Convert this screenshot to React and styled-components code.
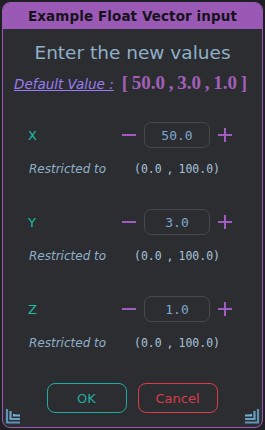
import React from "react";
import styled, { createGlobalStyle } from "styled-components";

const GlobalStyle = createGlobalStyle`
  html, body {
    margin: 0;
    padding: 0;
    background: #1f2023;
  }
  body {
    font-family: "DejaVu Sans", "Liberation Sans", sans-serif;
  }
`;

const Window = styled.div`
  width: 265px;
  height: 430px;
  padding: 2px;
  box-sizing: border-box;
`;

const Panel = styled.div`
  height: 100%;
  box-sizing: border-box;
  border: 1px solid #9b59b6;
  border-radius: 8px;
  background: #2b2d31;
  overflow: hidden;
  display: flex;
  flex-direction: column;
  position: relative;
`;

const Header = styled.div`
  height: 26px;
  background: #9b59b6;
  color: #17131c;
  font-weight: bold;
  font-size: 13.5px;
  display: flex;
  align-items: center;
  justify-content: center;
  letter-spacing: 0.1px;
`;

const Title = styled.div`
  margin-top: 13px;
  text-align: center;
  color: #8fb0c8;
  font-size: 18.5px;
  line-height: 22px;
`;

const DefaultLine = styled.div`
  margin-top: 8px;
  padding-left: 11px;
  display: flex;
  align-items: baseline;
  gap: 8px;
  line-height: 22px;
`;

const DefaultLabel = styled.span`
  color: #9a7cf2;
  font-style: italic;
  font-size: 13.5px;
  text-decoration: underline;
`;

const DefaultValue = styled.span`
  color: #a35fb8;
  font-family: "Liberation Serif", serif;
  font-weight: bold;
  font-size: 19px;
  word-spacing: -1px;
`;

const Group = styled.div`
  margin-top: ${(p) => (p.first ? 27 : 33)}px;
  padding: 0 30px 0 25px;
`;

const Row = styled.div`
  display: flex;
  align-items: center;
  height: 26px;
`;

const AxisLabel = styled.span`
  flex: 1;
  color: #1dbda3;
  font-size: 13px;
`;

const StepButton = styled.span`
  width: 14px;
  height: 14px;
  position: relative;
  &::before,
  &::after {
    content: "";
    position: absolute;
    background: #a05cc0;
  }
  &::before {
    left: 0;
    right: 0;
    top: 6px;
    height: 2px;
  }
  &::after {
    display: ${(p) => (p.plus ? "block" : "none")};
    top: 0;
    bottom: 0;
    left: 6px;
    width: 2px;
  }
`;

const ValueBox = styled.div`
  width: 66px;
  height: 26px;
  margin: 0 8px;
  box-sizing: border-box;
  border: 1.5px solid #45484e;
  border-radius: 7px;
  display: flex;
  align-items: center;
  justify-content: center;
  color: #7fa8d0;
  font-family: "DejaVu Sans Mono", monospace;
  font-size: 13px;
`;

const Restriction = styled.div`
  margin-top: 14px;
  display: grid;
  grid-template-columns: 106px 1fr;
  align-items: center;
  line-height: 14px;
`;

const RestrictLabel = styled.span`
  color: #8fb0c8;
  font-style: italic;
  font-size: 12px;
  padding-left: 1px;
`;

const RestrictValue = styled.span`
  color: #a9c2da;
  font-family: "DejaVu Sans Mono", monospace;
  font-size: 11.5px;
  word-spacing: -2px;
`;

const Buttons = styled.div`
  margin-top: 33px;
  display: flex;
  justify-content: center;
  gap: 11px;
  padding-right: 1px;
`;

const Button = styled.button`
  width: 80px;
  height: 30px;
  background: transparent;
  border: 1.5px solid ${(p) => p.color};
  border-radius: 8px;
  color: ${(p) => p.color};
  font-family: "DejaVu Sans", sans-serif;
  font-size: 13px;
  padding: 0;
`;

const Corner = styled.svg`
  position: absolute;
  bottom: 3px;
  ${(p) => (p.right ? "right: 2px;" : "left: 2px;")}
  width: 16px;
  height: 16px;
  transform: ${(p) => (p.right ? "scaleX(-1)" : "none")};
`;

const axes = [
  { name: "X", value: "50.0" },
  { name: "Y", value: "3.0" },
  { name: "Z", value: "1.0" },
];

function CornerMark({ right }) {
  return (
    <Corner right={right} viewBox="0 0 16 16">
      <path d="M2 1 V14.5 H15" stroke="#5f93b8" strokeWidth="2.2" fill="none" />
      <path d="M5.5 3 V11 H15" stroke="#6aa0c4" strokeWidth="2.2" fill="none" />
      <path d="M9 6 V7.5 H15" stroke="#76aed0" strokeWidth="2.2" fill="none" />
    </Corner>
  );
}

export default function App() {
  return (
    <Window>
      <GlobalStyle />
      <Panel>
        <Header>Example Float Vector input</Header>
        <Title>Enter the new values</Title>
        <DefaultLine>
          <DefaultLabel>Default Value :</DefaultLabel>
          <DefaultValue>[ 50.0 , 3.0 , 1.0 ]</DefaultValue>
        </DefaultLine>
        {axes.map((axis, i) => (
          <Group key={axis.name} first={i === 0}>
            <Row>
              <AxisLabel>{axis.name}</AxisLabel>
              <StepButton />
              <ValueBox>{axis.value}</ValueBox>
              <StepButton plus />
            </Row>
            <Restriction>
              <RestrictLabel>Restricted to</RestrictLabel>
              <RestrictValue>(0.0 , 100.0)</RestrictValue>
            </Restriction>
          </Group>
        ))}
        <Buttons>
          <Button color="#21aaa0">OK</Button>
          <Button color="#dc3c4a">Cancel</Button>
        </Buttons>
        <CornerMark />
        <CornerMark right />
      </Panel>
    </Window>
  );
}
